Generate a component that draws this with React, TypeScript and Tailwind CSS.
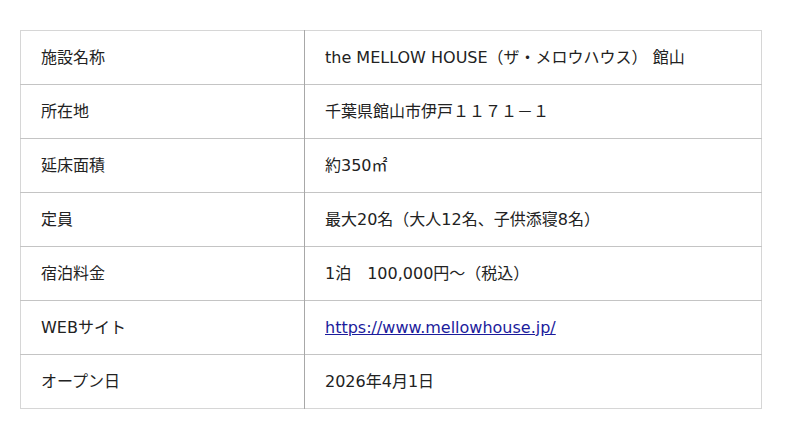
const ROWS: { label: string; value: string; href?: string }[] = [
  { label: "施設名称", value: "the MELLOW HOUSE（ザ・メロウハウス） 館山" },
  { label: "所在地", value: "千葉県館山市伊戸１１７１－１" },
  { label: "延床面積", value: "約350㎡" },
  { label: "定員", value: "最大20名（大人12名、子供添寝8名）" },
  { label: "宿泊料金", value: "1泊　100,000円〜（税込）" },
  { label: "WEBサイト", value: "https://www.mellowhouse.jp/", href: "https://www.mellowhouse.jp/" },
  { label: "オープン日", value: "2026年4月1日" },
];

export default function App() {
  return (
    <div
      className="h-[439px] w-[800px] bg-white pl-[20px] pt-[30px] text-[16px] text-[#222]"
      style={{ fontFamily: '"DejaVu Sans", "Noto Sans CJK JP", sans-serif' }}
    >
      <table className="w-[742px] border-collapse border border-[#d6d6d6]">
        <tbody>
          {ROWS.map((r) => (
            <tr key={r.label} className="h-[54px] border-b border-[#c4c4c4] last:border-b-[#d6d6d6]">
              <td className="w-[284px] border-r border-[#a8a8a8] px-[20px] align-middle">
                {r.label}
              </td>
              <td className="px-[20px] align-middle">
                {r.href ? (
                  <a href={r.href} className="text-[#1c1c9c] underline">
                    {r.value}
                  </a>
                ) : (
                  r.value
                )}
              </td>
            </tr>
          ))}
        </tbody>
      </table>
    </div>
  );
}
